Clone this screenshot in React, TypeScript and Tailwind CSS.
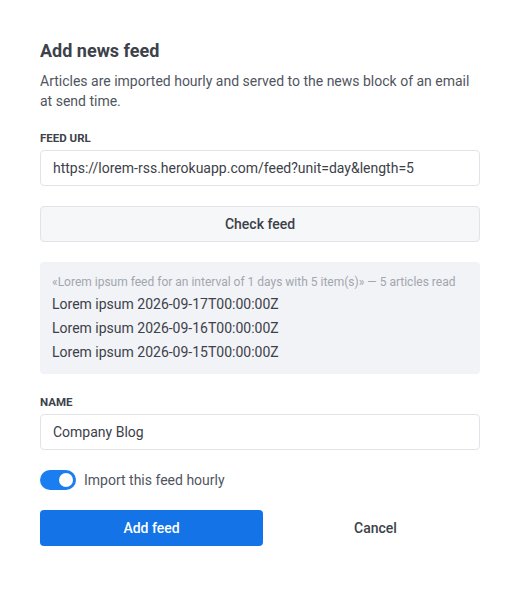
import { useState } from "react";

const App = () => {
  const [url, setUrl] = useState("https://lorem-rss.herokuapp.com/feed?unit=day&length=5");
  const [name, setName] = useState("Company Blog");
  const [hourly, setHourly] = useState(true);

  const articles = [
    "Lorem ipsum 2026-09-17T00:00:00Z",
    "Lorem ipsum 2026-09-16T00:00:00Z",
    "Lorem ipsum 2026-09-15T00:00:00Z",
  ];

  return (
    <div className="min-h-[600px] bg-white font-['Roboto',sans-serif] text-[#3d4149]">
      <div className="px-10 pt-[39px]">
        <h2 className="text-lg font-bold leading-[24px] text-[#3d4149]">Add news feed</h2>
        <p className="mt-[8px] text-sm leading-[20px] text-[#50555e]">
          Articles are imported hourly and served to the news block of an email at send time.
        </p>

        {/* Feed URL */}
        <label className="mt-[19px] block text-[11.5px] font-bold uppercase leading-[16px] text-[#3d4149]">
          Feed URL
        </label>
        <input
          value={url}
          onChange={(e) => setUrl(e.target.value)}
          className="mt-[4px] block h-[36px] w-full rounded border border-[#e1e3e8] px-3 text-sm text-[#3d4149] outline-none"
        />

        <button className="mt-[20px] flex h-[36px] w-full items-center justify-center rounded border border-[#e1e3e8] bg-[#f6f7f9] text-sm font-medium text-[#3d4149]">
          Check feed
        </button>

        {/* Preview */}
        <div className="mt-[20px] rounded bg-[#f1f3f7] px-3 pb-[10px] pt-[10px]">
          <p className="text-xs leading-[20px] text-[#a2a6ae]">
            «Lorem ipsum feed for an interval of 1 days with 5 item(s)» — 5 articles read
          </p>
          {articles.map((a) => (
            <p key={a} className="text-sm leading-[24px] text-[#3d4149]">
              {a}
            </p>
          ))}
        </div>

        {/* Name */}
        <label className="mt-[20px] block text-[11.5px] font-bold uppercase leading-[16px] text-[#3d4149]">
          Name
        </label>
        <input
          value={name}
          onChange={(e) => setName(e.target.value)}
          className="mt-[4px] block h-[36px] w-full rounded border border-[#e1e3e8] px-3 text-sm text-[#3d4149] outline-none"
        />

        <label className="mt-[20px] flex items-center gap-2 text-sm text-[#50555e]">
          <button
            onClick={() => setHourly(!hourly)}
            className={`relative h-[20px] w-[36px] rounded-full ${hourly ? "bg-[#1b7ef0]" : "bg-[#c8ccd3]"}`}
          >
            <span
              className={`absolute top-[3px] h-[14px] w-[14px] rounded-full bg-white ${hourly ? "left-[19px]" : "left-[3px]"}`}
            />
          </button>
          Import this feed hourly
        </label>

        <div className="mt-[20px] flex">
          <button className="h-[36px] w-[223px] rounded bg-[#1473e6] text-sm font-medium text-white">
            Add feed
          </button>
          <button className="ml-2 h-[36px] flex-1 text-sm font-medium text-[#3d4149]">Cancel</button>
        </div>
      </div>
    </div>
  );
};

export default App;
